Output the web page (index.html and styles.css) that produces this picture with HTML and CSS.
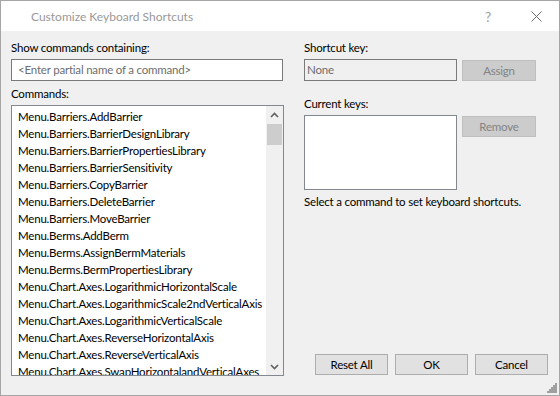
FILE: index.html
```html
<!DOCTYPE html>
<html lang="en">
<head>
    <meta charset="UTF-8">
    <title>Customize Keyboard Shortcuts</title>
    <link rel="stylesheet" href="styles.css">
</head>
<body>
    <div class="window">
        <div class="titlebar">
            <span class="title">Customize Keyboard Shortcuts</span>
            <span class="help">?</span>
            <span class="close">
                <svg width="11" height="11" viewBox="0 0 11 11">
                    <path d="M0.5 0.5 L10.5 10.5 M10.5 0.5 L0.5 10.5" stroke="#6a6a6a" stroke-width="1" fill="none"/>
                </svg>
            </span>
        </div>

        <div class="content">
            <div class="left">
                <div class="label">Show commands containing:</div>
                <div class="textbox search">&lt;Enter partial name of a command&gt;</div>

                <div class="label commands-label">Commands:</div>
                <div class="listbox">
                    <ul class="items">
                        <li>Menu.Barriers.AddBarrier</li>
                        <li>Menu.Barriers.BarrierDesignLibrary</li>
                        <li>Menu.Barriers.BarrierPropertiesLibrary</li>
                        <li>Menu.Barriers.BarrierSensitivity</li>
                        <li>Menu.Barriers.CopyBarrier</li>
                        <li>Menu.Barriers.DeleteBarrier</li>
                        <li>Menu.Barriers.MoveBarrier</li>
                        <li>Menu.Berms.AddBerm</li>
                        <li>Menu.Berms.AssignBermMaterials</li>
                        <li>Menu.Berms.BermPropertiesLibrary</li>
                        <li>Menu.Chart.Axes.LogarithmicHorizontalScale</li>
                        <li>Menu.Chart.Axes.LogarithmicScale2ndVerticalAxis</li>
                        <li>Menu.Chart.Axes.LogarithmicVerticalScale</li>
                        <li>Menu.Chart.Axes.ReverseHorizontalAxis</li>
                        <li>Menu.Chart.Axes.ReverseVerticalAxis</li>
                        <li>Menu.Chart.Axes.SwapHorizontalandVerticalAxes</li>
                    </ul>
                    <div class="scrollbar">
                        <div class="arrow">
                            <svg width="9" height="6" viewBox="0 0 9 6">
                                <path d="M1 5 L4.5 1.5 L8 5" stroke="#606060" stroke-width="1.6" fill="none"/>
                            </svg>
                        </div>
                        <div class="thumb"></div>
                        <div class="track"></div>
                        <div class="arrow">
                            <svg width="9" height="6" viewBox="0 0 9 6">
                                <path d="M1 1 L4.5 4.5 L8 1" stroke="#606060" stroke-width="1.6" fill="none"/>
                            </svg>
                        </div>
                    </div>
                </div>
            </div>

            <div class="right">
                <div class="label">Shortcut key:</div>
                <div class="row">
                    <div class="textbox shortcut">None</div>
                    <div class="button disabled assign">Assign</div>
                </div>

                <div class="label keys-label">Current keys:</div>
                <div class="row">
                    <div class="keys-box"></div>
                    <div class="button disabled remove">Remove</div>
                </div>

                <div class="hint">Select a command to set keyboard shortcuts.</div>

                <div class="actions">
                    <div class="button">Reset All</div>
                    <div class="button">OK</div>
                    <div class="button">Cancel</div>
                </div>
            </div>
        </div>

        <svg class="grip" width="10" height="10" viewBox="0 0 10 10">
            <g fill="#a0a0a0">
                <rect x="8" y="0" width="2" height="2"/>
                <rect x="6" y="2" width="2" height="2"/>
                <rect x="8" y="2" width="2" height="2"/>
                <rect x="4" y="4" width="2" height="2"/>
                <rect x="6" y="4" width="2" height="2"/>
                <rect x="8" y="4" width="2" height="2"/>
                <rect x="2" y="6" width="2" height="2"/>
                <rect x="4" y="6" width="2" height="2"/>
                <rect x="6" y="6" width="2" height="2"/>
                <rect x="8" y="6" width="2" height="2"/>
                <rect x="0" y="8" width="2" height="2"/>
                <rect x="2" y="8" width="2" height="2"/>
                <rect x="4" y="8" width="2" height="2"/>
                <rect x="6" y="8" width="2" height="2"/>
                <rect x="8" y="8" width="2" height="2"/>
            </g>
        </svg>
    </div>
</body>
</html>
```

FILE: styles.css
```css
body {
    margin: 0;
    font-family: Lato, "Noto Sans", sans-serif;
    font-size: 11.5px;
    letter-spacing: -0.2px;
    color: #000000;
}

.window {
    position: relative;
    width: 560px;
    height: 396px;
    box-sizing: border-box;
    border: 1px solid #a6a6a6;
    background-color: #f0f0f0;
    display: flex;
    flex-direction: column;
}

.titlebar {
    height: 30px;
    background-color: #ffffff;
    display: flex;
    align-items: center;
    flex-shrink: 0;
}

.title {
    margin-left: 30px;
    font-size: 12px;
    letter-spacing: 0;
    color: #999999;
    flex: 1;
}

.help {
    font-size: 14px;
    color: #a0a0a0;
    margin-right: 40px;
}

.close {
    display: flex;
    margin-right: 17px;
}

.content {
    flex: 1;
    min-height: 0;
    display: flex;
    gap: 20px;
    padding: 9px 11px 19px 10px;
}

.left {
    width: 273px;
    display: flex;
    flex-direction: column;
}

.label {
    line-height: 15px;
    height: 15px;
    white-space: nowrap;
}

.textbox {
    box-sizing: border-box;
    height: 22px;
    border: 1px solid #7a7a7a;
    line-height: 20px;
    white-space: nowrap;
    overflow: hidden;
}

.search {
    margin-top: 4px;
    width: 272px;
    background-color: #ffffff;
    color: #6d6d6d;
    padding-left: 6px;
}

.commands-label {
    margin-top: 5px;
}

.listbox {
    margin-top: 4px;
    flex: 1;
    min-height: 0;
    border: 1px solid #828790;
    background-color: #ffffff;
    display: flex;
    overflow: hidden;
}

.items {
    list-style: none;
    margin: 0;
    padding: 2px 0 0 6px;
    flex: 1;
    overflow: hidden;
}

.items li {
    height: 17px;
    line-height: 17px;
    white-space: nowrap;
}

.scrollbar {
    width: 17px;
    background-color: #f0f0f0;
    display: flex;
    flex-direction: column;
}

.arrow {
    height: 17px;
    display: flex;
    align-items: center;
    justify-content: center;
    flex-shrink: 0;
}

.thumb {
    height: 21px;
    margin: 1px 1px 0 1px;
    background-color: #cdcdcd;
}

.track {
    flex: 1;
}

.right {
    width: 244px;
    display: flex;
    flex-direction: column;
}

.row {
    display: flex;
    align-items: flex-start;
    gap: 5px;
}

.right .label + .row {
    margin-top: 4px;
}

.shortcut {
    width: 153px;
    background-color: #f0f0f0;
    color: #6d6d6d;
    padding-left: 2px;
}

.button {
    box-sizing: border-box;
    width: 74px;
    height: 21px;
    line-height: 19px;
    text-align: center;
    border: 1px solid #adadad;
    background-color: #e1e1e1;
}

.button.disabled {
    background-color: #cccccc;
    border-color: #bfbfbf;
    color: #838383;
}

.assign {
    margin-top: 1px;
}

.keys-label {
    margin-top: 15px;
}

.keys-box {
    box-sizing: border-box;
    width: 153px;
    height: 75px;
    border: 1px solid #828790;
    background-color: #ffffff;
}

.remove {
    margin-top: 1px;
}

.hint {
    margin-top: 4px;
    line-height: 15px;
    white-space: nowrap;
}

.actions {
    margin-top: auto;
    margin-bottom: 1px;
    margin-left: 11px;
    display: flex;
    gap: 7px;
}

.actions .button {
    width: 73px;
}

.grip {
    position: absolute;
    right: 2px;
    bottom: 2px;
}
```
